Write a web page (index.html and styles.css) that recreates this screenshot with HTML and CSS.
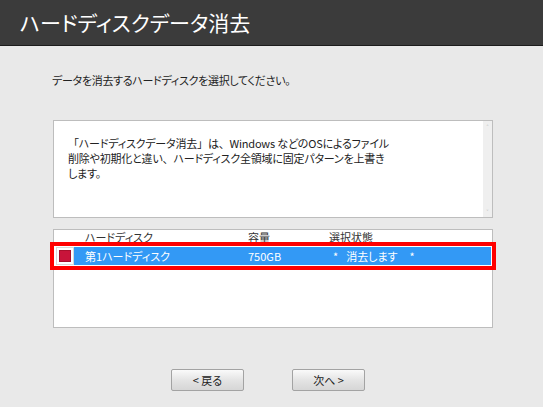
FILE: index.html
```html
<!DOCTYPE html>
<html lang="ja">
<head>
<meta charset="utf-8">
<title>ハードディスクデータ消去</title>
<link rel="stylesheet" href="styles.css">
</head>
<body>
<div class="page">
  <header class="header">
    <h1 class="title">ハードディスクデータ消去</h1>
  </header>
  <main class="main">
    <p class="intro">データを消去するハードディスクを選択してください。</p>
    <div class="textbox">
      <p class="desc"><span class="fw">「</span>ハードディスクデータ消去<span class="fw">」</span>は<span class="fw">、</span>Windows などのOSによるファイル<br>削除や初期化と違い<span class="fw">、</span>ハードディスク全領域に固定パターンを上書き<br>します。</p>
      <div class="scrollbar">
        <span class="arrow">&#x2C4;</span>
        <span class="arrow">&#x2C5;</span>
      </div>
    </div>
    <div class="listwrap">
      <div class="list">
        <div class="list-head">
          <span class="col col-name">ハードディスク</span>
          <span class="col col-size">容量</span>
          <span class="col col-state">選択状態</span>
        </div>
        <div class="list-row">
          <span class="check-cell"><span class="check"></span></span>
          <span class="row-body">
            <span class="col col-name">第1ハードディスク</span>
            <span class="col col-size">750GB</span>
            <span class="col col-state"><span class="star">*</span><span class="state-text">消去します</span><span class="star">*</span></span>
          </span>
        </div>
      </div>
      <div class="highlight"></div>
    </div>
    <div class="buttons">
      <button class="btn">&lt; 戻る</button>
      <button class="btn">次へ &gt;</button>
    </div>
  </main>
</div>
</body>
</html>
```

FILE: styles.css
```css
* { box-sizing: border-box; }
html, body { margin: 0; padding: 0; }
body {
  width: 543px;
  height: 407px;
  overflow: hidden;
  background: #e9e9e9;
  font-family: "Noto Sans CJK JP", "Noto Sans", sans-serif;
  color: #222;
}
.page { width: 543px; height: 407px; display: flex; flex-direction: column; }
.header {
  height: 46px;
  background: #3b3b3b;
  border-bottom: 1px solid #1c1c1c;
  padding-left: 20px;
  display: flex;
  align-items: center;
}
.title {
  margin: 0;
  margin-top: -2px;
  font-weight: normal;
  font-size: 21px;
  color: #ffffff;
  font-feature-settings: "palt";
}
.main {
  flex: 1;
  background: #e9e9e9;
  display: flex;
  flex-direction: column;
}
.intro {
  margin: 27px 0 0 52px;
  font-size: 11px;
  line-height: 14px;
  font-feature-settings: "palt";
  letter-spacing: -0.3px;
  color: #222;
}
.textbox {
  margin: 33px 0 0 53px;
  width: 440px;
  height: 98px;
  background: #fff;
  border: 1px solid #bdbdbd;
  display: flex;
  justify-content: space-between;
}
.desc {
  margin: 15px 0 0 14px;
  font-size: 11px;
  line-height: 15px;
  font-feature-settings: "palt";
  letter-spacing: -0.2px;
  color: #222;
}
.fw { font-feature-settings: normal; }
.scrollbar {
  width: 9px;
  background: #efefef;
  display: flex;
  flex-direction: column;
  justify-content: space-between;
  align-items: center;
  font-size: 7px;
  line-height: 8px;
  color: #aaa;
  padding: 2px 0 1px;
}
.listwrap {
  position: relative;
  margin: 11px 0 0 53px;
  width: 440px;
  height: 99px;
}
.list {
  width: 440px;
  height: 99px;
  background: #fff;
  border: 1px solid #bdbdbd;
  font-size: 11px;
  font-feature-settings: "palt";
}
.list-head {
  height: 16px;
  display: flex;
  align-items: center;
  padding-bottom: 2px;
  color: #333;
}
.list-row {
  margin-top: 1px;
  height: 18px;
  display: flex;
  padding-left: 2px;
}
.check-cell {
  width: 18px;
  height: 18px;
  background: #fff;
  border: 1px solid #d8d8d8;
  display: flex;
  align-items: center;
  justify-content: center;
}
.check {
  width: 12px;
  height: 12px;
  background: #c8143a;
  border: 1px solid #a80f2c;
}
.row-body {
  flex: 1;
  margin-right: 1px;
  background: #3399f5;
  color: #fff;
  display: flex;
  align-items: center;
}
.col { display: inline-block; white-space: nowrap; }
.list-head .col-name { margin-left: 31px; width: 163px; }
.list-head .col-size { width: 81px; }
.row-body .col-name { margin-left: 11px; width: 163px; }
.row-body .col-size { width: 85px; }
.star { display: inline-block; }
.state-text { display: inline-block; margin: 0 12px 0 8px; }
.highlight {
  position: absolute;
  left: -3px;
  top: 13px;
  width: 446px;
  height: 28px;
  border: 4px solid #ff0000;
  pointer-events: none;
}
.buttons {
  display: flex;
  gap: 48px;
  margin: 41px 0 0 171px;
}
.btn {
  width: 73px;
  height: 22px;
  padding: 0;
  border: 1px solid #a3a3a3;
  border-radius: 2px;
  background: linear-gradient(#fafafa, #e4e4e4 50%, #d6d6d6);
  font-family: "Noto Sans CJK JP", "Noto Sans", sans-serif;
  font-size: 11px;
  color: #222;
  font-feature-settings: "palt";
}
```
